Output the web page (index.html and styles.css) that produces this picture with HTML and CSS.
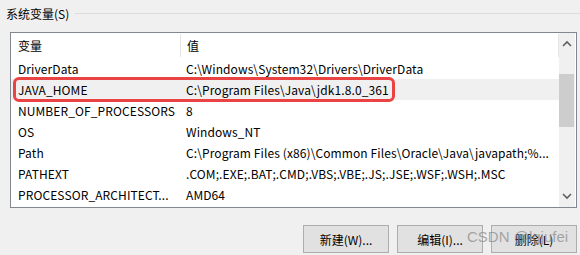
FILE: index.html
```html
<!DOCTYPE html>
<html lang="zh-CN">
<head>
    <meta charset="UTF-8">
    <title>系统变量</title>
    <link rel="stylesheet" href="styles.css">
</head>
<body>
    <div class="group-title">
        <span>系统变量(S)</span>
        <div class="group-line"></div>
    </div>

    <div class="list-box">
        <div class="list-main">
            <div class="list-header">
                <div class="col-name">变量</div>
                <div class="col-value">值</div>
            </div>
            <div class="row">
                <div class="col-name">DriverData</div>
                <div class="col-value">C:\Windows\System32\Drivers\DriverData</div>
            </div>
            <div class="row selected">
                <div class="col-name">JAVA_HOME</div>
                <div class="col-value">C:\Program Files\Java\jdk1.8.0_361</div>
                <div class="highlight-box"></div>
            </div>
            <div class="row">
                <div class="col-name">NUMBER_OF_PROCESSORS</div>
                <div class="col-value">8</div>
            </div>
            <div class="row">
                <div class="col-name">OS</div>
                <div class="col-value">Windows_NT</div>
            </div>
            <div class="row">
                <div class="col-name">Path</div>
                <div class="col-value">C:\Program Files (x86)\Common Files\Oracle\Java\javapath;%...</div>
            </div>
            <div class="row">
                <div class="col-name">PATHEXT</div>
                <div class="col-value">.COM;.EXE;.BAT;.CMD;.VBS;.VBE;.JS;.JSE;.WSF;.WSH;.MSC</div>
            </div>
            <div class="row">
                <div class="col-name">PROCESSOR_ARCHITECT...</div>
                <div class="col-value">AMD64</div>
            </div>
        </div>
        <div class="scrollbar">
            <svg class="arrow" width="16" height="16" viewBox="0 0 16 16"><path d="M4 10 L8 6 L12 10" fill="none" stroke="#606060" stroke-width="1.6"/></svg>
            <div class="thumb"></div>
            <svg class="arrow arrow-down" width="16" height="16" viewBox="0 0 16 16"><path d="M4 6 L8 10 L12 6" fill="none" stroke="#606060" stroke-width="1.6"/></svg>
        </div>
    </div>

    <div class="buttons">
        <button>新建(W)...</button>
        <button>编辑(I)...</button>
        <button>删除(L)</button>
        <span class="watermark">CSDN @lgjufei</span>
    </div>
</body>
</html>
```

FILE: styles.css
```css
body {
    margin: 0;
    width: 580px;
    height: 255px;
    background-color: #f0f0f0;
    font-family: "Noto Sans CJK SC", "Noto Sans", sans-serif;
    font-size: 12px;
    color: #000;
    overflow: hidden;
}
.group-title {
    display: flex;
    align-items: center;
    height: 27px;
    padding-left: 6px;
}
.group-line {
    flex: 1;
    height: 1px;
    margin-left: 6px;
    background-color: #dcdcdc;
}
.list-box {
    display: flex;
    margin: 5px 0 0 10px;
    width: 565px;
    height: 174px;
    border: 1px solid #828790;
    background-color: #fff;
}
.list-main {
    flex: 1;
    display: flex;
    flex-direction: column;
}
.list-header {
    display: flex;
    align-items: center;
    height: 25px;
}
.list-header .col-name {
    height: 23px;
    border-right: 1px solid #e5e5e5;
}
.list-header .col-value {
    flex: 1;
    height: 23px;
    border-right: 1px solid #e5e5e5;
}
.row {
    position: relative;
    display: flex;
    align-items: center;
    height: 21px;
}
.row.selected {
    background-color: #f0f0f0;
}
.col-name {
    width: 162px;
    padding-left: 7px;
    white-space: nowrap;
    letter-spacing: 0.1px;
}
.col-value {
    padding-left: 6px;
    white-space: nowrap;
    line-height: 23px;
    letter-spacing: 0.1px;
}
.list-header .col-name,
.list-header .col-value {
    line-height: 23px;
}
.highlight-box {
    position: absolute;
    left: 2px;
    top: -2px;
    width: 376px;
    height: 19px;
    border: 3px solid #ea4343;
    border-radius: 6px;
}
.scrollbar {
    position: relative;
    width: 16px;
    margin-right: 1px;
    background-color: #f0f0f0;
}
.arrow {
    position: absolute;
    left: 0;
    top: 3px;
}
.arrow-down {
    top: auto;
    bottom: 3px;
}
.thumb {
    position: absolute;
    left: 0;
    top: 41px;
    width: 15px;
    height: 53px;
    background-color: #cdcdcd;
}
.buttons {
    position: relative;
    display: flex;
    justify-content: flex-end;
    gap: 8px;
    width: 567px;
    margin: 17px 0 0 10px;
}
button {
    width: 86px;
    height: 28px;
    padding: 0;
    background-color: #e1e1e1;
    border: 1px solid #adadad;
    font-family: "Noto Sans CJK SC", sans-serif;
    font-size: 12px;
    color: #000;
}
.watermark {
    position: absolute;
    left: 457px;
    top: 3px;
    font-family: "Liberation Sans", sans-serif;
    font-size: 15px;
    color: rgba(140, 140, 140, 0.75);
    white-space: nowrap;
}
```
